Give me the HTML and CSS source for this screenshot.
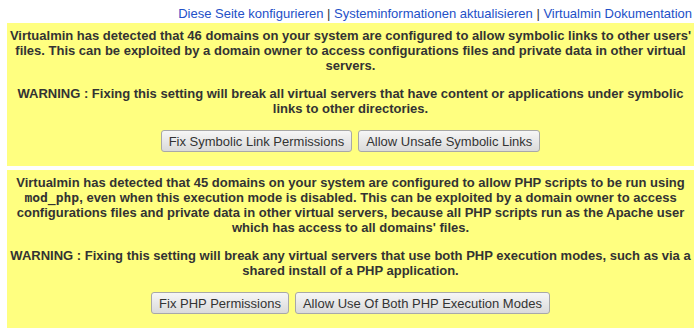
FILE: index.html
```html
<!DOCTYPE html>
<html>

<head>
    <title>Virtualmin</title>

    <!-- For styling -->
    <link rel="stylesheet" href="styles.css">
</head>

<body>

    <!-- Page links -->
    <div class="links">
        <a href="#">Diese Seite konfigurieren</a> |
        <a href="#">Systeminformationen aktualisieren</a> |
        <a href="#">Virtualmin Dokumentation</a>
    </div>

    <!-- Symlink warning -->
    <div class="alert">
        <p>Virtualmin has detected that 46 domains on your system are configured to allow symbolic links to other users'
            files. This can be exploited by a domain owner to access configurations files and private data in other virtual
            servers.</p>
        <p>WARNING : Fixing this setting will break all virtual servers that have content or applications under symbolic
            links to other directories.</p>
        <div class="actions">
            <input type="button" value="Fix Symbolic Link Permissions">
            <input type="button" value="Allow Unsafe Symbolic Links">
        </div>
    </div>

    <!-- PHP warning -->
    <div class="alert">
        <p>Virtualmin has detected that 45 domains on your system are configured to allow PHP scripts to be run using
            <tt>mod_php</tt>, even when this execution mode is disabled. This can be exploited by a domain owner to access
            configurations files and private data in other virtual servers, because all PHP scripts run as the Apache user
            which has access to all domains' files.</p>
        <p>WARNING : Fixing this setting will break any virtual servers that use both PHP execution modes, such as via a
            shared install of a PHP application.</p>
        <div class="actions">
            <input type="button" value="Fix PHP Permissions">
            <input type="button" value="Allow Use Of Both PHP Execution Modes">
        </div>
    </div>

</body>

</html>
```

FILE: styles.css
```css
body {
    margin: 0;
    background-color: white;
    font-family: "Liberation Sans", Arial, sans-serif;
    color: #333;
}

.links {
    padding: 6px 8px 0 0;
    text-align: right;
    font-size: 13px;
    line-height: 15px;
    color: #333;
}

.links a {
    color: #2350c8;
    text-decoration: none;
}

.alert {
    margin: 2px 6px 4px 7px;
    padding: 5px 2px 14px;
    background-color: #ffff80;
    text-align: center;
    font-size: 13px;
    font-weight: bold;
    line-height: 15px;
}

.alert p {
    margin: 0 0 13px;
}

.alert tt {
    font-family: "DejaVu Sans Mono", monospace;
    font-size: 13px;
}

.actions {
    display: flex;
    justify-content: center;
    gap: 6px;
    padding-top: 1px;
}

input[type="button"] {
    height: 22px;
    padding: 0 7px;
    background: linear-gradient(#f6f6f6, #dadada);
    color: #333;
    font-family: "Liberation Sans", Arial, sans-serif;
    font-size: 13px;
    border: 1px solid #a8a8a8;
    border-radius: 3px;
}
```
